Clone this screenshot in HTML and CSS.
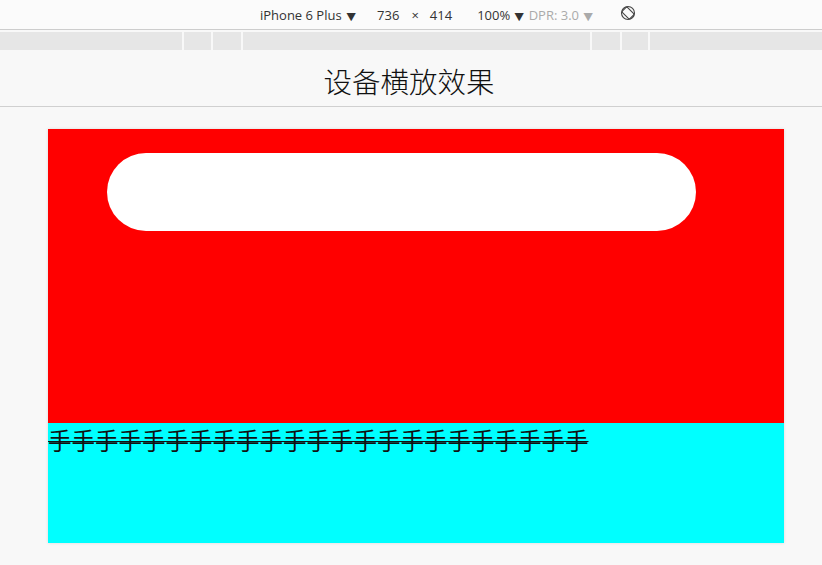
FILE: index.html
```html
<!DOCTYPE html>
<html>
<head>
<meta charset="utf-8">
<link rel="stylesheet" href="styles.css">
</head>
<body>
<div class="toolbar">
  <span class="device">iPhone 6 Plus<span class="tri">▼</span></span>
  <span class="dim">736</span>
  <span class="times">×</span>
  <span class="dim">414</span>
  <span class="zoom">100%<span class="tri">▼</span></span>
  <span class="dpr">DPR: 3.0<span class="tri">▼</span></span>
  <span class="rotate">
    <svg width="16" height="16" viewBox="0 0 16 16"><g fill="none" stroke="#444" stroke-width="1.1"><circle cx="8" cy="8" r="6.5"/><rect x="4.4" y="2.6" width="7.2" height="10.8" rx="1.3" transform="rotate(-45 8 8)"/></g></svg>
  </span>
</div>
<div class="ruler">
  <div class="seg s1"></div>
  <div class="seg s2"></div>
  <div class="seg s3"></div>
  <div class="seg s4"></div>
  <div class="seg s5"></div>
  <div class="seg s6"></div>
  <div class="seg s7"></div>
</div>
<div class="header">设备横放效果</div>
<div class="stage">
  <div class="screen">
    <div class="top">
      <div class="pill"></div>
    </div>
    <div class="bottom">
      <p class="hands">手手手手手手手手手手手手手手手手手手手手手手手</p>
    </div>
  </div>
</div>
</body>
</html>
```

FILE: styles.css
```css
html, body {
  margin: 0;
  padding: 0;
  background: #f8f8f8;
  width: 822px;
  height: 565px;
  overflow: hidden;
}
.toolbar {
  height: 29px;
  background: #fbfbfb;
  border-bottom: 1px solid #cdcdcd;
  display: flex;
  align-items: center;
  font-family: "Open Sans", sans-serif;
  font-size: 13px;
  color: #333;
  padding-left: 260px;
  box-sizing: content-box;
}
.tri {
  font-family: "DejaVu Sans", sans-serif;
  font-size: 11px;
  margin-left: 5px;
  transform: scaleX(1.1);
  display: inline-block;
}
.device { margin-right: 22px; }
.times { margin: 0 11px 0 12px; }
.zoom { margin-left: 25px; margin-right: 5px; }
.dpr { color: #aaa; }
.rotate { margin-left: 27px; display: flex; margin-top: -3px; }
.ruler {
  margin-top: 2px;
  height: 18px;
  display: flex;
  gap: 2px;
}
.seg { background: #e6e6e6; height: 18px; }
.s1 { width: 182px; }
.s2 { width: 27px; }
.s3 { width: 28px; }
.s4 { width: 347px; }
.s5 { width: 28px; }
.s6 { width: 26px; }
.s7 { flex: 1; }
.header {
  border-bottom: 1px solid #d0d0d0;
  display: flex;
  align-items: center;
  justify-content: center;
  font-family: "Noto Sans CJK SC", sans-serif;
  font-size: 28.5px;
  font-weight: 300;
  color: #111;
  padding: 5px 4px 0 0;
  box-sizing: border-box;
  height: 57px;
}
.stage {
  padding: 22px 0 0 48px;
}
.screen {
  width: 736px;
  height: 414px;
  box-shadow: 0 0 3px rgba(0,0,0,0.12);
  display: flex;
  flex-direction: column;
}
.top {
  height: 294px;
  background: #ff0000;
  padding: 24px 0 0 59px;
  box-sizing: border-box;
}
.pill {
  width: 589px;
  height: 78px;
  border-radius: 39px;
  background: #fff;
}
.bottom {
  flex: 1;
  background: #00ffff;
}
.hands {
  margin: 0;
  font-family: "Noto Sans CJK SC", sans-serif;
  font-size: 23.5px;
  line-height: 34px;
  color: #111;
  text-decoration: line-through;
  text-decoration-thickness: 1px;
}
```
